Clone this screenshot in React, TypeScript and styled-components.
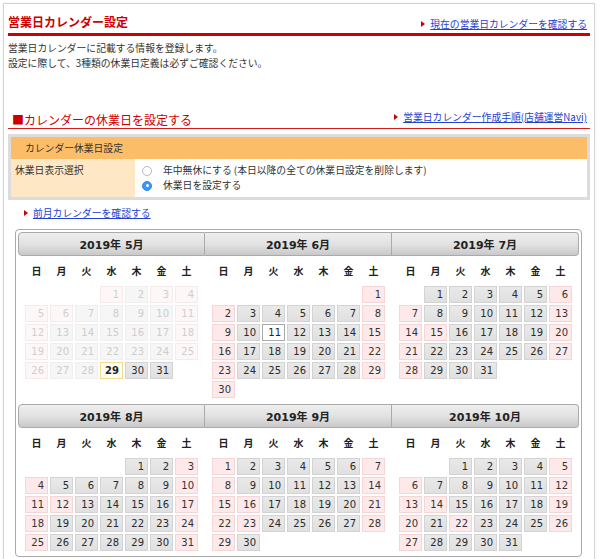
import React from 'react';
import styled, { createGlobalStyle, css } from 'styled-components';

const GlobalStyle = createGlobalStyle`
  body {
    margin: 0;
    background: #ffffff;
    font-family: 'Noto Sans CJK JP', sans-serif;
    color: #333333;
  }
`;

const Panel = styled.div`
  width: 582px;
  min-height: 560px;
  margin: 3px 0 0 3px;
  padding: 0 4px;
  background: #ffffff;
  border: 1px solid #d4d4d4;
  border-bottom: none;
  box-shadow: 0 0 2px rgba(0, 0, 0, 0.08);
`;

const TitleRow = styled.div`
  display: flex;
  justify-content: space-between;
  align-items: flex-end;
  padding: 10px 3px 3px 0;
  border-bottom: 3px solid #cc0000;
`;

const Title = styled.h1`
  margin: 0;
  font-size: 12px;
  line-height: 16px;
  font-weight: bold;
  color: #cc0000;
`;

const TriLink = styled.a<{ $lh?: number }>`
  display: inline-flex;
  align-items: center;
  font-size: 9.8px;
  line-height: ${(p) => p.$lh ?? 12}px;
  color: #2341d0;
  text-decoration: underline;
  cursor: pointer;

  &::before {
    content: '';
    display: inline-block;
    margin-right: 5px;
    border-left: 4px solid #cc0000;
    border-top: 3.5px solid transparent;
    border-bottom: 3.5px solid transparent;
  }
`;

const Intro = styled.p`
  margin: 5px 0 0;
  font-size: 9.8px;
  line-height: 15px;
  color: #333333;
`;

const SectionRow = styled.div`
  display: flex;
  justify-content: space-between;
  align-items: flex-start;
  margin-top: 41px;
  padding-right: 3px;
  border-bottom: 1px solid #d21d1d;
`;

const SectionTitle = styled.h2`
  margin: 0 0 0 4px;
  font-size: 12px;
  line-height: 16px;
  font-weight: normal;
  color: #cc0000;
`;

const SettingTable = styled.div`
  margin-top: 5px;
  border: 3px solid #dcdcdc;
`;

const SettingHead = styled.div`
  height: 22px;
  padding-left: 14px;
  display: flex;
  align-items: center;
  background: #fcbd69;
  font-size: 9.8px;
  color: #333333;
`;

const SettingBody = styled.div`
  display: flex;
  height: 38px;
`;

const LabelCell = styled.div`
  width: 120px;
  padding: 4px 0 0 4px;
  background: #fee7c4;
  font-size: 9.8px;
  line-height: 15px;
`;

const OptionCell = styled.div`
  flex: 1;
  padding: 4px 0 0 7px;
  background: #ffffff;
`;

const Option = styled.label`
  display: flex;
  align-items: center;
  gap: 11px;
  font-size: 9.8px;
  line-height: 15px;
  color: #333333;
`;

const RadioMark = styled.span<{ $checked?: boolean }>`
  position: relative;
  width: 10px;
  height: 10px;
  box-sizing: border-box;
  border-radius: 50%;
  ${(p) =>
    p.$checked
      ? css`
          background: #3b97f5;
          border: 1px solid #2f86e6;
          &::after {
            content: '';
            position: absolute;
            left: 2.5px;
            top: 2.5px;
            width: 3px;
            height: 3px;
            border-radius: 50%;
            background: #ffffff;
          }
        `
      : css`
          background: #ffffff;
          border: 1px solid #b9b9b9;
        `}
`;

const PrevLinkRow = styled.div`
  margin-top: 2px;
  padding-left: 16px;
  line-height: 15px;
`;

const Frame = styled.div`
  width: 561px;
  margin: 8px 0 0 7px;
  padding: 2px 2px 5px;
  border: 1px solid #aaaaaa;
  border-radius: 4px;
  display: grid;
  grid-template-columns: repeat(3, 187px);
  row-gap: 6px;
  align-items: start;
  font-family: 'DejaVu Sans', 'Noto Sans CJK JP', sans-serif;
`;

const Month = styled.div`
  display: flex;
  flex-direction: column;
`;

const MonthHead = styled.div<{ $pos: number }>`
  height: 24px;
  box-sizing: border-box;
  display: flex;
  align-items: center;
  justify-content: center;
  border: 1px solid #aaaaaa;
  background: linear-gradient(to bottom, #eeeeee 0%, #e2e2e2 50%, #c9c9c9 100%);
  font-size: 11px;
  font-weight: bold;
  color: #222222;
  ${(p) => p.$pos > 0 && 'border-left: none;'}
  border-radius: ${(p) => (p.$pos === 0 ? '4px 0 0 4px' : p.$pos === 2 ? '0 4px 4px 0' : '0')};
`;

const WeekRow = styled.div`
  height: 30px;
  display: grid;
  grid-template-columns: repeat(7, 23px);
  column-gap: 2px;
  justify-content: center;
  align-items: center;
  font-family: 'Noto Sans CJK JP', sans-serif;
  font-size: 10px;
  font-weight: bold;
  color: #222222;
  text-align: center;
`;

const DayGrid = styled.div`
  display: grid;
  grid-template-columns: repeat(7, 23px);
  grid-auto-rows: 17px;
  gap: 2px;
  justify-content: center;
`;

type Kind = 'past' | 'pastOff' | 'today' | 'open' | 'off' | 'marked';

const kindStyle: Record<Kind, { bg: string; border: string; color: string; weight: string }> = {
  past: { bg: '#f6f6f6', border: '#efefef', color: '#cdcdcd', weight: 'normal' },
  pastOff: { bg: '#fdf7f7', border: '#f6eaea', color: '#cfcfcf', weight: 'normal' },
  today: { bg: '#fffdf4', border: '#f2dc8c', color: '#222222', weight: 'bold' },
  open: { bg: 'linear-gradient(#e9e9e9, #e0e0e0)', border: '#d3d3d3', color: '#2a2a2a', weight: 'normal' },
  off: { bg: '#fde9e9', border: '#f4d6d6', color: '#333333', weight: 'normal' },
  marked: { bg: '#ffffff', border: '#a8a8a8', color: '#222222', weight: 'normal' },
};

const DayCell = styled.div<{ $kind: Kind }>`
  box-sizing: border-box;
  padding-right: 3px;
  text-align: right;
  font-size: 10px;
  line-height: 15px;
  background: ${(p) => kindStyle[p.$kind].bg};
  border: 1px solid ${(p) => kindStyle[p.$kind].border};
  color: ${(p) => kindStyle[p.$kind].color};
  font-weight: ${(p) => kindStyle[p.$kind].weight};
`;

const Blank = styled.div``;

const weekNames = ['日', '月', '火', '水', '木', '金', '土'];

const months = [
  { m: 5, holidays: [1, 3, 6] },
  { m: 6, holidays: [] },
  { m: 7, holidays: [15] },
  { m: 8, holidays: [12] },
  { m: 9, holidays: [16, 23] },
  { m: 10, holidays: [14, 22] },
];

const dayKind = (m: number, d: number, dow: number, holidays: number[]): Kind => {
  const off = dow === 0 || dow === 6 || holidays.includes(d);
  if (m === 5 && d < 29) return off ? 'pastOff' : 'past';
  if (m === 5 && d === 29) return 'today';
  if (m === 6 && d === 11) return 'marked';
  return off ? 'off' : 'open';
};

const MonthView = ({ m, holidays, pos }: { m: number; holidays: number[]; pos: number }) => {
  const first = new Date(2019, m - 1, 1).getDay();
  const days = new Date(2019, m, 0).getDate();
  return (
    <Month>
      <MonthHead $pos={pos}>2019年 {m}月</MonthHead>
      <WeekRow>
        {weekNames.map((w) => (
          <span key={w}>{w}</span>
        ))}
      </WeekRow>
      <DayGrid>
        {Array.from({ length: first }, (_, i) => (
          <Blank key={'b' + i} />
        ))}
        {Array.from({ length: days }, (_, i) => {
          const d = i + 1;
          const dow = (first + i) % 7;
          return (
            <DayCell key={d} $kind={dayKind(m, d, dow, holidays)}>
              {d}
            </DayCell>
          );
        })}
      </DayGrid>
    </Month>
  );
};

const App = () => {
  return (
    <>
      <GlobalStyle />
      <Panel>
        <TitleRow>
          <Title>営業日カレンダー設定</Title>
          <TriLink>現在の営業日カレンダーを確認する</TriLink>
        </TitleRow>
        <Intro>
          営業日カレンダーに記載する情報を登録します。
          <br />
          設定に際して、3種類の休業日定義は必ずご確認ください。
        </Intro>

        <SectionRow>
          <SectionTitle>■カレンダーの休業日を設定する</SectionTitle>
          <TriLink $lh={10}>営業日カレンダー作成手順(店舗運営Navi)</TriLink>
        </SectionRow>

        <SettingTable>
          <SettingHead>カレンダー休業日設定</SettingHead>
          <SettingBody>
            <LabelCell>休業日表示選択</LabelCell>
            <OptionCell>
              <Option>
                <RadioMark />
                年中無休にする (本日以降の全ての休業日設定を削除します)
              </Option>
              <Option>
                <RadioMark $checked />
                休業日を設定する
              </Option>
            </OptionCell>
          </SettingBody>
        </SettingTable>

        <PrevLinkRow>
          <TriLink $lh={15}>前月カレンダーを確認する</TriLink>
        </PrevLinkRow>

        <Frame>
          {months.map((mo, i) => (
            <MonthView key={mo.m} m={mo.m} holidays={mo.holidays} pos={i % 3} />
          ))}
        </Frame>
      </Panel>
    </>
  );
};

export default App;
